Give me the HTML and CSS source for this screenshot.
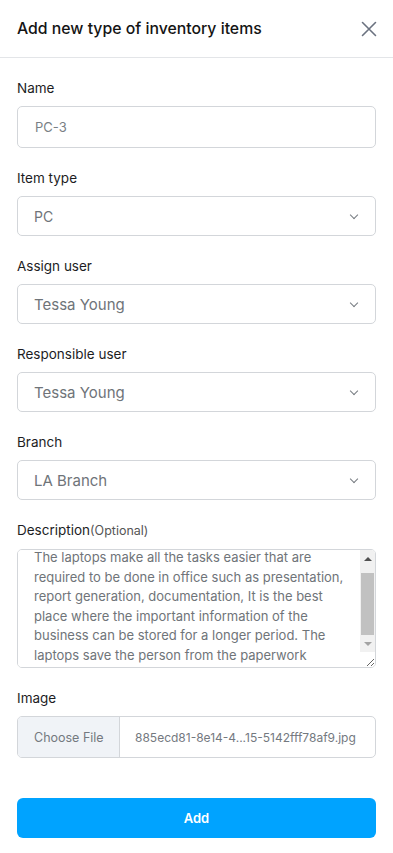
FILE: index.html
```html
<!DOCTYPE html>
<html lang="en">

<head>
    <meta charset="UTF-8">
    <meta name="viewport" content="width=device-width, initial-scale=1.0">
    <title>Add new type of inventory items</title>
    <link rel="stylesheet" href="styles.css">
</head>

<body>
    <div class="modal">
        <div class="modalHeader">
            <h2 class="modalTitle">Add new type of inventory items</h2>
            <button class="closeBtn" type="button" aria-label="Close">
                <svg width="16" height="16" viewBox="0 0 16 16">
                    <path d="M1.5 1.5 L14.5 14.5 M14.5 1.5 L1.5 14.5" stroke="#6b7280" stroke-width="1.6" fill="none" stroke-linecap="round" />
                </svg>
            </button>
        </div>

        <form id="itemForm" class="modalBody">
            <div class="field">
                <label for="name">Name</label>
                <input type="text" id="name" class="textBox" placeholder="PC-3">
            </div>

            <div class="field">
                <label for="itemType">Item type</label>
                <div class="selectBox">
                    <select id="itemType">
                        <option selected>PC</option>
                        <option>Laptop</option>
                    </select>
                    <span class="chevron"></span>
                </div>
            </div>

            <div class="field">
                <label for="assignUser">Assign user</label>
                <div class="selectBox">
                    <select id="assignUser" class="bigText">
                        <option selected>Tessa Young</option>
                    </select>
                    <span class="chevron"></span>
                </div>
            </div>

            <div class="field">
                <label for="responsibleUser">Responsible user</label>
                <div class="selectBox">
                    <select id="responsibleUser" class="bigText">
                        <option selected>Tessa Young</option>
                    </select>
                    <span class="chevron"></span>
                </div>
            </div>

            <div class="field">
                <label for="branch">Branch</label>
                <div class="selectBox">
                    <select id="branch" class="bigText">
                        <option selected>LA Branch</option>
                    </select>
                    <span class="chevron"></span>
                </div>
            </div>

            <div class="field">
                <label for="description">Description<span class="optional">(Optional)</span></label>
                <div class="textAreaBox">
                    <textarea id="description" class="textArea">The laptops make all the tasks easier that are required to be done in office such as presentation, report generation, documentation, It is the best place where the important information of the business can be stored for a longer period. The laptops save the person from the paperwork</textarea>
                    <!-- Scrollbar drawn by hand, the browser hides the real one -->
                    <div class="scrollBar">
                        <span class="arrowUp"></span>
                        <span class="thumb"></span>
                        <span class="arrowDown"></span>
                    </div>
                </div>
            </div>

            <div class="field">
                <label for="image">Image</label>
                <div class="fileBox">
                    <span class="fileBtn">Choose File</span>
                    <span class="fileName">885ecd81-8e14-4...15-5142fff78af9.jpg</span>
                </div>
            </div>

            <button class="addBtn" type="submit">Add</button>
        </form>
    </div>

    <script>
        // Scroll the description a little, like the user already typed in it
        const description = document.querySelector("#description");
        description.scrollTop = 10;
    </script>
</body>

</html>
```

FILE: styles.css
```css
* {
    box-sizing: border-box;
}

body {
    margin: 0;
    background-color: #fff;
    font-family: Inter, "Noto Sans", Arial, sans-serif;
    color: #1d1d1f;
}

.modalHeader {
    display: flex;
    align-items: center;
    justify-content: space-between;
    height: 58px;
    padding: 0 17px;
    border-bottom: 1px solid #e3e5e8;
}

.modalTitle {
    margin: 0;
    font-size: 15.8px;
    font-weight: 500;
    color: #141414;
}

.closeBtn {
    border: none;
    background: none;
    padding: 0;
    margin-right: -1px;
    display: flex;
    cursor: pointer;
}

.modalBody {
    display: flex;
    flex-direction: column;
    gap: 20px;
    padding: 20px 17px 0 17px;
}

.field {
    display: flex;
    flex-direction: column;
    gap: 8px;
}

.field label {
    font-size: 13.5px;
    line-height: 20px;
    color: #1d1d1f;
}

.optional {
    font-size: 12.5px;
    color: #555;
}

.textBox,
.selectBox select,
.textArea {
    width: 100%;
    border: 1px solid #d3d6da;
    border-radius: 5px;
    background-color: #fff;
    font-family: inherit;
    color: #6f7479;
}

.textBox {
    height: 42px;
    padding: 0 17px;
    font-size: 13px;
}

.textBox::placeholder {
    color: #7a7f85;
}

.selectBox {
    position: relative;
}

.selectBox select {
    height: 40px;
    padding: 0 16px;
    font-size: 14px;
    appearance: none;
    outline: none;
}

.selectBox select.bigText {
    font-size: 15px;
}

/* Small chevron on the right of the select */
.chevron {
    position: absolute;
    right: 19px;
    top: 16px;
    width: 6px;
    height: 6px;
    border-right: 1.5px solid #777c82;
    border-bottom: 1.5px solid #777c82;
    transform: rotate(45deg);
    pointer-events: none;
}

.textAreaBox {
    position: relative;
}

.textArea {
    display: block;
    height: 119px;
    padding: 8px 31px 8px 16px;
    font-size: 13px;
    line-height: 19.5px;
    resize: vertical;
    overflow-y: scroll;
}

.scrollBar {
    position: absolute;
    top: 1px;
    right: 1px;
    bottom: 16px;
    width: 15px;
    display: flex;
    flex-direction: column;
    background-color: #f1f1f1;
    border-top-right-radius: 4px;
    pointer-events: none;
}

.arrowUp,
.arrowDown {
    height: 17px;
    display: flex;
    align-items: center;
    justify-content: center;
}

.arrowUp::before,
.arrowDown::before {
    content: "";
    width: 0;
    height: 0;
    border-left: 4px solid transparent;
    border-right: 4px solid transparent;
}

.arrowUp::before {
    border-bottom: 4px solid #505050;
}

.arrowDown::before {
    border-top: 4px solid #a3a3a3;
}

.thumb {
    flex: 1;
    margin: 6px 1px 0 1px;
    background-color: #c1c1c1;
}

.fileBox {
    display: flex;
    height: 42px;
    border: 1px solid #d3d6da;
    border-radius: 5px;
    overflow: hidden;
    color: #74797f;
}

.fileBtn {
    display: flex;
    align-items: center;
    width: 102px;
    padding-left: 16px;
    background-color: #f0f3f7;
    border-right: 1px solid #d3d6da;
    font-size: 12.5px;
}

.fileName {
    display: flex;
    align-items: center;
    padding-left: 15px;
    font-size: 12px;
    white-space: nowrap;
}

.addBtn {
    margin-top: 20px;
    height: 40px;
    border: none;
    border-radius: 6px;
    background-color: #00a3ff;
    color: #fff;
    font-family: inherit;
    font-size: 13px;
    font-weight: 600;
    cursor: pointer;
}
```
